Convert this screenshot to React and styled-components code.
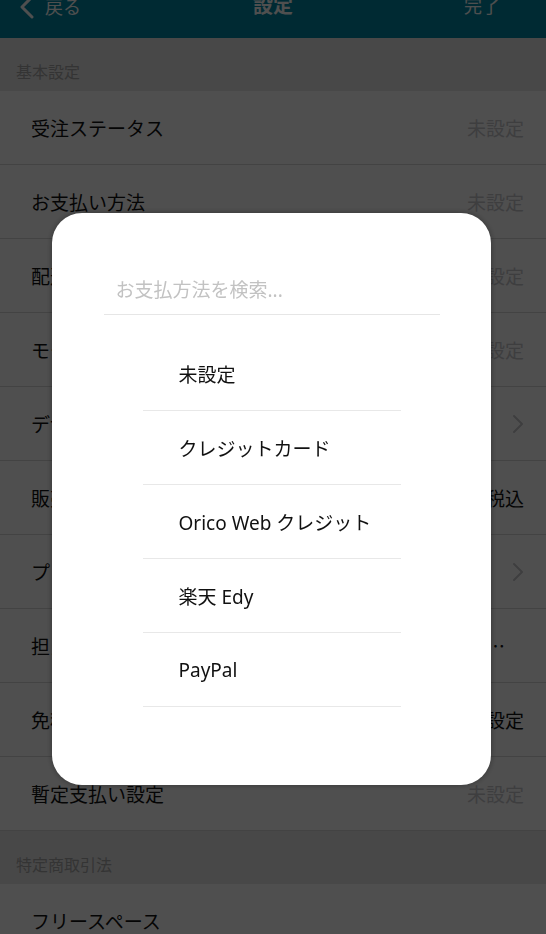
import React from 'react';
import styled, { createGlobalStyle } from 'styled-components';

const GlobalStyle = createGlobalStyle`
    html, body {
        margin: 0;
        padding: 0;
        height: 100%;
        overflow: hidden;
        background-color: #e8e8e8;
        font-family: "Noto Sans", "Noto Sans CJK JP", sans-serif;
    }
    * {
        box-sizing: border-box;
    }
`;

const Page = styled.div`
    display: flex;
    flex-direction: column;
`;

const NavBar = styled.header`
    height: 38px;
    background-color: #0087a4;
    color: #FFFFFF;
    display: grid;
    grid-template-columns: 1fr auto 1fr;
    align-items: start;
`;

const NavBack = styled.div`
    display: flex;
    align-items: center;
    gap: 10px;
    padding-left: 19px;
    margin-top: -6px;
    font-size: 18px;
    line-height: 24px;
`;

const NavTitle = styled.div`
    font-size: 20px;
    font-weight: bold;
    line-height: 24px;
    margin-top: -6px;
`;

const NavDone = styled.div`
    justify-self: end;
    padding-right: 46px;
    font-size: 18px;
    line-height: 24px;
    margin-top: -6px;
`;

const SectionHeader = styled.div`
    height: 53px;
    display: flex;
    align-items: flex-end;
    padding: 0 16px 9px;
    font-size: 16px;
    line-height: 20px;
    color: #a8a8a8;
    background-color: #e8e8e8;
`;

const Row = styled.div`
    height: 74px;
    display: flex;
    align-items: center;
    justify-content: space-between;
    gap: 16px;
    padding: 0 22px 0 31px;
    background-color: #FFFFFF;
    border-bottom: 1px solid #d9d9d9;
    font-size: 19px;
    color: #111111;
`;

const RowLabel = styled.span`
    white-space: nowrap;
`;

const RowValue = styled.span`
    white-space: nowrap;
    margin-right: ${({ $trail }) => ($trail ? '19px' : '0')};
    font-family: "Noto Sans CJK JP", sans-serif;
    color: ${({ $muted }) => ($muted ? '#c7c7cc' : '#111111')};
`;

const Overlay = styled.div`
    position: fixed;
    inset: 0;
    background-color: rgba(0, 0, 0, 0.69);
    display: flex;
    justify-content: center;
    align-items: flex-start;
    padding-top: 213px;
`;

const Modal = styled.div`
    width: 439px;
    margin-right: 3px;
    background-color: #FFFFFF;
    border-radius: 30px;
    box-shadow: 0 0 6px rgba(0, 0, 0, 0.35);
    padding: 53px 0 78px;
    display: flex;
    flex-direction: column;
    align-items: center;
`;

const SearchInput = styled.input`
    width: 336px;
    height: 49px;
    border: none;
    border-bottom: 1px solid #e6e6e6;
    padding: 0 12px;
    font-family: inherit;
    font-size: 19px;
    color: #111111;
    outline: none;
    background: transparent;

    &::placeholder {
        color: #c2c2c2;
    }
`;

const OptionList = styled.ul`
    list-style: none;
    margin: 22px 0 0;
    padding: 0;
    width: 258px;
`;

const Option = styled.li`
    height: 74px;
    display: flex;
    align-items: center;
    padding-left: 36px;
    border-bottom: 1px solid #e8e8e8;
    font-size: 19px;
    color: #111111;
`;

const BackChevron = () => (
    <svg width="16" height="26" viewBox="0 0 16 26" fill="none">
        <polyline points="13,3 3,13 13,23" stroke="#FFFFFF" strokeWidth="3" strokeLinecap="round" strokeLinejoin="round" />
    </svg>
);

const RowChevron = () => (
    <svg width="12" height="20" viewBox="0 0 12 20" fill="none">
        <polyline points="2,2 10,10 2,18" stroke="#c7c7cc" strokeWidth="2" strokeLinecap="round" strokeLinejoin="round" />
    </svg>
);

const basicRows = [
    { label: '受注ステータス', value: '未設定', muted: true },
    { label: 'お支払い方法', value: '未設定', muted: true },
    { label: '配送方法', value: '未設定', muted: true },
    { label: 'モール連携', value: '未設定', muted: true },
    { label: 'デザイン設定', chevron: true },
    { label: '販売価格の表示', value: '税込' },
    { label: 'プリンター設定', chevron: true },
    { label: '担当者', value: '担当者を選択…', trail: true },
    { label: '免税', value: '課税設定' },
    { label: '暫定支払い設定', value: '未設定', muted: true },
];

const paymentOptions = ['未設定', 'クレジットカード', 'Orico Web クレジット', '楽天 Edy', 'PayPal'];

const App = () => {
    return (
        <>
            <GlobalStyle />
            <Page>
                <NavBar>
                    <NavBack>
                        <BackChevron />
                        戻る
                    </NavBack>
                    <NavTitle>設定</NavTitle>
                    <NavDone>完了</NavDone>
                </NavBar>
                <SectionHeader>基本設定</SectionHeader>
                {basicRows.map((row) => (
                    <Row key={row.label}>
                        <RowLabel>{row.label}</RowLabel>
                        {row.chevron ? (
                            <RowChevron />
                        ) : (
                            <RowValue $muted={row.muted} $trail={row.trail}>{row.value}</RowValue>
                        )}
                    </Row>
                ))}
                <SectionHeader>特定商取引法</SectionHeader>
                <Row>
                    <RowLabel>フリースペース</RowLabel>
                </Row>
            </Page>
            <Overlay>
                <Modal>
                    <SearchInput placeholder="お支払方法を検索..." />
                    <OptionList>
                        {paymentOptions.map((name) => (
                            <Option key={name}>{name}</Option>
                        ))}
                    </OptionList>
                </Modal>
            </Overlay>
        </>
    );
};

export default App;
